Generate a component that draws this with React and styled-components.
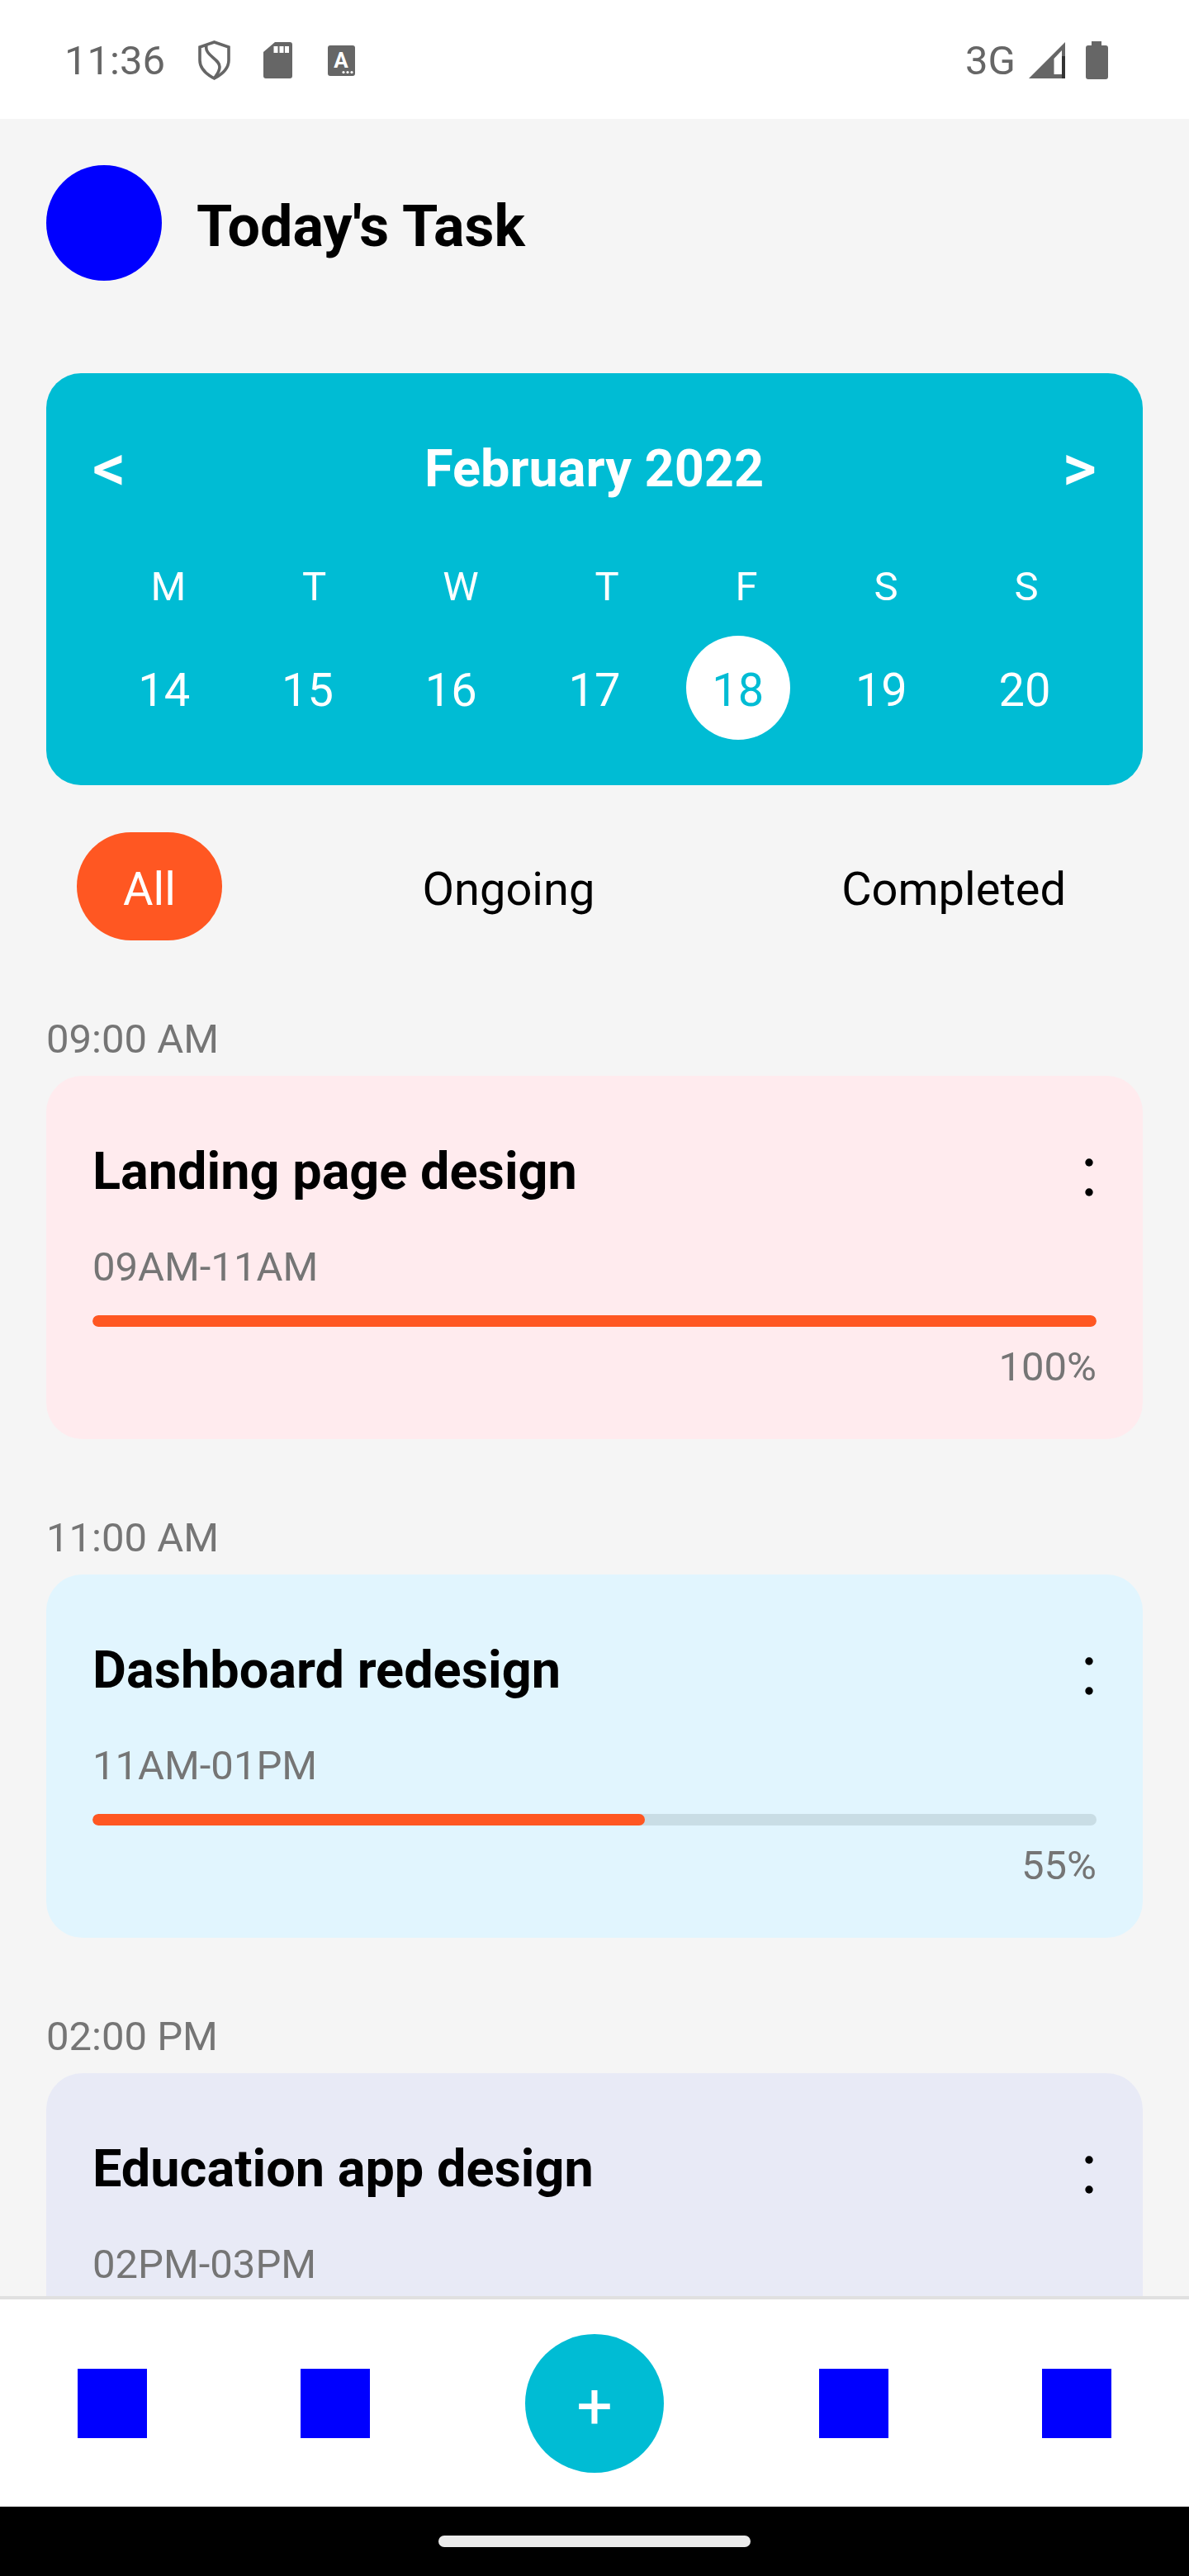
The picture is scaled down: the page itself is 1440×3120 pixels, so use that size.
import React from 'react';
import styled, { createGlobalStyle } from 'styled-components';

const GlobalStyle = createGlobalStyle`
  html, body { margin: 0; padding: 0; background: #f5f5f5; }
  * { box-sizing: border-box; }
`;

const Screen = styled.div`
  width: 1440px;
  height: 3120px;
  overflow: hidden;
  display: flex;
  flex-direction: column;
  background: #f5f5f5;
  font-family: Roboto, "Liberation Sans", sans-serif;
`;

const StatusBar = styled.div`
  height: 144px;
  flex: none;
  background: #fff;
  color: #666;
  display: flex;
  align-items: center;
  justify-content: space-between;
  padding: 2px 98px 0 78px;
  font-size: 49px;
`;

const StatusGroup = styled.div`
  display: flex;
  align-items: center;
`;

const StatusText = styled.span`
  margin-right: ${(p) => p.$gap}px;
`;

const StatusIcon = styled.svg`
  display: block;
  flex: none;
  margin-right: ${(p) => p.$gap || 0}px;
`;

const Content = styled.main`
  flex: 1;
  min-height: 0;
  overflow: hidden;
  padding: 56px 56px 0;
`;

const Header = styled.header`
  display: flex;
  align-items: center;
  gap: 42px;
  margin-bottom: 112px;
`;

const Avatar = styled.div`
  width: 140px;
  height: 140px;
  border-radius: 50%;
  background: #0000ff;
`;

const Title = styled.h1`
  margin: 8px 0 0;
  font-size: 70px;
  font-weight: 700;
  color: #000;
`;

const Calendar = styled.section`
  height: 499px;
  border-radius: 42px;
  background: #00bcd4;
  color: #fff;
  padding: 68px 56px 0;
`;

const MonthRow = styled.div`
  display: flex;
  align-items: center;
  justify-content: space-between;
`;

const Month = styled.span`
  font-size: 63px;
  font-weight: 700;
`;

const Arrow = styled.span`
  font-size: 80px;
  font-weight: 500;
`;

const WeekRow = styled.div`
  display: flex;
  justify-content: space-around;
  margin-top: 68px;
  font-size: 49px;
`;

const DayRow = styled.div`
  display: flex;
  justify-content: space-around;
  margin-top: 31px;
  font-size: 56px;
`;

const Day = styled.div`
  width: 126px;
  height: 126px;
  padding-top: 5px;
  border-radius: 50%;
  display: flex;
  align-items: center;
  justify-content: center;
  background: ${(p) => (p.$active ? '#fff' : 'transparent')};
  color: ${(p) => (p.$active ? '#00bcd4' : '#fff')};
`;

const Tabs = styled.nav`
  display: flex;
  align-items: center;
  justify-content: space-between;
  padding: 0 37px 0 37px;
  margin-top: 57px;
`;

const Tab = styled.div`
  height: 131px;
  padding: 6px 56px 0;
  border-radius: 66px;
  display: flex;
  align-items: center;
  justify-content: center;
  font-size: 56px;
  background: ${(p) => (p.$active ? '#ff5722' : 'transparent')};
  color: ${(p) => (p.$active ? '#fff' : '#000')};
`;

const TaskGroup = styled.section`
  margin-top: ${(p) => p.$top}px;
`;

const Time = styled.div`
  font-size: 49px;
  color: #757575;
  margin-bottom: 16px;
`;

const TaskCard = styled.article`
  height: 440px;
  border-radius: 44px;
  background: ${(p) => p.$bg};
  padding: 79px 56px 0;
`;

const TaskHead = styled.div`
  display: flex;
  align-items: center;
  justify-content: space-between;
`;

const TaskTitle = styled.h2`
  margin: 0;
  font-size: 63px;
  font-weight: 700;
  color: #000;
`;

const MenuDots = styled.svg`
  display: block;
  margin: 14px 4px 0 0;
`;

const TaskHours = styled.div`
  margin-top: 51px;
  font-size: 49px;
  color: #757575;
`;

const Track = styled.div`
  height: 14px;
  border-radius: 7px;
  margin-top: 30px;
  background: ${(p) => p.$bg};
  overflow: hidden;
`;

const Fill = styled.div`
  height: 100%;
  border-radius: 7px;
  background: #ff5722;
`;

const Percent = styled.div`
  margin-top: 20px;
  text-align: right;
  font-size: 49px;
  color: #757575;
`;

const BottomNav = styled.nav`
  flex: none;
  height: 255px;
  background: #fff;
  border-top: 4px solid #e0e0e0;
  display: flex;
  align-items: center;
  justify-content: space-between;
  padding: 0 94px;
`;

const NavSquare = styled.div`
  width: 84px;
  height: 84px;
  background: #0000ff;
`;

const NavPair = styled.div`
  display: flex;
  gap: 186px;
`;

const AddButton = styled.div`
  width: 168px;
  height: 168px;
  border-radius: 50%;
  background: #00bcd4;
  color: #fff;
  display: flex;
  align-items: center;
  justify-content: center;
  padding-top: 8px;
  font-size: 77px;
`;

const SystemBar = styled.div`
  flex: none;
  height: 84px;
  background: #000;
  display: flex;
  align-items: center;
  justify-content: center;
`;

const HomePill = styled.div`
  width: 378px;
  height: 14px;
  border-radius: 7px;
  background: #ebebeb;
`;

const Menu = () => (
  <MenuDots width="10" height="46" viewBox="0 0 10 46" fill="#000">
    <circle cx="5" cy="5" r="4.7" />
    <circle cx="5" cy="41" r="4.7" />
  </MenuDots>
);

const Shield = () => (
  <StatusIcon $gap={40} width="39" height="48" viewBox="0 0 39 48" fill="none" stroke="#666" strokeWidth="3.6">
    <path d="M19.5 2 L37 8 V24 C37 34 29 41 19.5 46 C10 41 2 34 2 24 V8 Z" />
    <path d="M10 6 C7 18 26 22 26 32 C26 38 22 42 19.5 46" />
  </StatusIcon>
);

const SdCard = () => (
  <StatusIcon $gap={43} width="35" height="44" viewBox="0 0 35 44">
    <path d="M14 0 H32 Q35 0 35 3 V41 Q35 44 32 44 H3 Q0 44 0 41 V12 Z" fill="#666" />
    <path d="M12.5 5h5v8h-5zM19.5 5h5v8h-5zM26 5h5v8h-5z" fill="#fff" />
  </StatusIcon>
);

const AppBadge = () => (
  <StatusIcon width="33" height="37" viewBox="0 0 33 37">
    <rect width="33" height="37" rx="3" fill="#666" />
    <text x="16" y="27" fontSize="26" fontWeight="700" textAnchor="middle" fill="#fff" fontFamily="Roboto, sans-serif">A</text>
    <circle cx="19" cy="32.5" r="1.6" fill="#fff" />
    <circle cx="24" cy="32.5" r="1.6" fill="#fff" />
    <circle cx="29" cy="32.5" r="1.6" fill="#fff" />
  </StatusIcon>
);

const Signal = () => (
  <StatusIcon $gap={25} width="44" height="44" viewBox="0 0 44 44">
    <path d="M44 0 V44 H0 Z" fill="#666" />
    <path d="M30.5 20 L40 10 V39 H30.5 Z" fill="#fff" />
    <path d="M40 17h4v27h-4z" fill="#333" />
  </StatusIcon>
);

const Battery = () => (
  <StatusIcon width="27" height="46" viewBox="0 0 27 46">
    <path d="M7 0 H19 V5 H24 Q27 5 27 8 V43 Q27 46 24 46 H3 Q0 46 0 43 V8 Q0 5 3 5 H7 Z" fill="#666" />
  </StatusIcon>
);

const week = ['M', 'T', 'W', 'T', 'F', 'S', 'S'];
const days = [14, 15, 16, 17, 18, 19, 20];

const tasks = [
  { time: '09:00 AM', title: 'Landing page design', hours: '09AM-11AM', pct: 100, bg: '#ffebee', track: '#ecc9cd', top: 91 },
  { time: '11:00 AM', title: 'Dashboard redesign', hours: '11AM-01PM', pct: 55, bg: '#e1f5fe', track: '#c9dde5', top: 91 },
  // the bottom nav covers the rest of this card, so no progress row here
  { time: '02:00 PM', title: 'Education app design', hours: '02PM-03PM', bg: '#e8eaf6', top: 91 },
];

export default function App() {
  return (
    <Screen>
      <GlobalStyle />
      <StatusBar>
        <StatusGroup>
          <StatusText $gap={40}>11:36</StatusText>
          <Shield />
          <SdCard />
          <AppBadge />
        </StatusGroup>
        <StatusGroup>
          <StatusText $gap={16}>3G</StatusText>
          <Signal />
          <Battery />
        </StatusGroup>
      </StatusBar>
      <Content>
        <Header>
          <Avatar />
          <Title>Today's Task</Title>
        </Header>
        <Calendar>
          <MonthRow>
            <Arrow>&lt;</Arrow>
            <Month>February 2022</Month>
            <Arrow>&gt;</Arrow>
          </MonthRow>
          <WeekRow>
            {week.map((d, i) => (
              <div key={i}>{d}</div>
            ))}
          </WeekRow>
          <DayRow>
            {days.map((d) => (
              <Day key={d} $active={d === 18}>{d}</Day>
            ))}
          </DayRow>
        </Calendar>
        <Tabs>
          <Tab $active>All</Tab>
          <Tab>Ongoing</Tab>
          <Tab>Completed</Tab>
        </Tabs>
        {tasks.map((t) => (
          <TaskGroup key={t.time} $top={t.top}>
            <Time>{t.time}</Time>
            <TaskCard $bg={t.bg}>
              <TaskHead>
                <TaskTitle>{t.title}</TaskTitle>
                <Menu />
              </TaskHead>
              <TaskHours>{t.hours}</TaskHours>
              {t.pct !== undefined && (
                <>
                  <Track $bg={t.track}>
                    <Fill style={{ width: `${t.pct}%` }} />
                  </Track>
                  <Percent>{t.pct}%</Percent>
                </>
              )}
            </TaskCard>
          </TaskGroup>
        ))}
      </Content>
      <BottomNav>
        <NavPair>
          <NavSquare />
          <NavSquare />
        </NavPair>
        <AddButton>+</AddButton>
        <NavPair>
          <NavSquare />
          <NavSquare />
        </NavPair>
      </BottomNav>
      <SystemBar>
        <HomePill />
      </SystemBar>
    </Screen>
  );
}
